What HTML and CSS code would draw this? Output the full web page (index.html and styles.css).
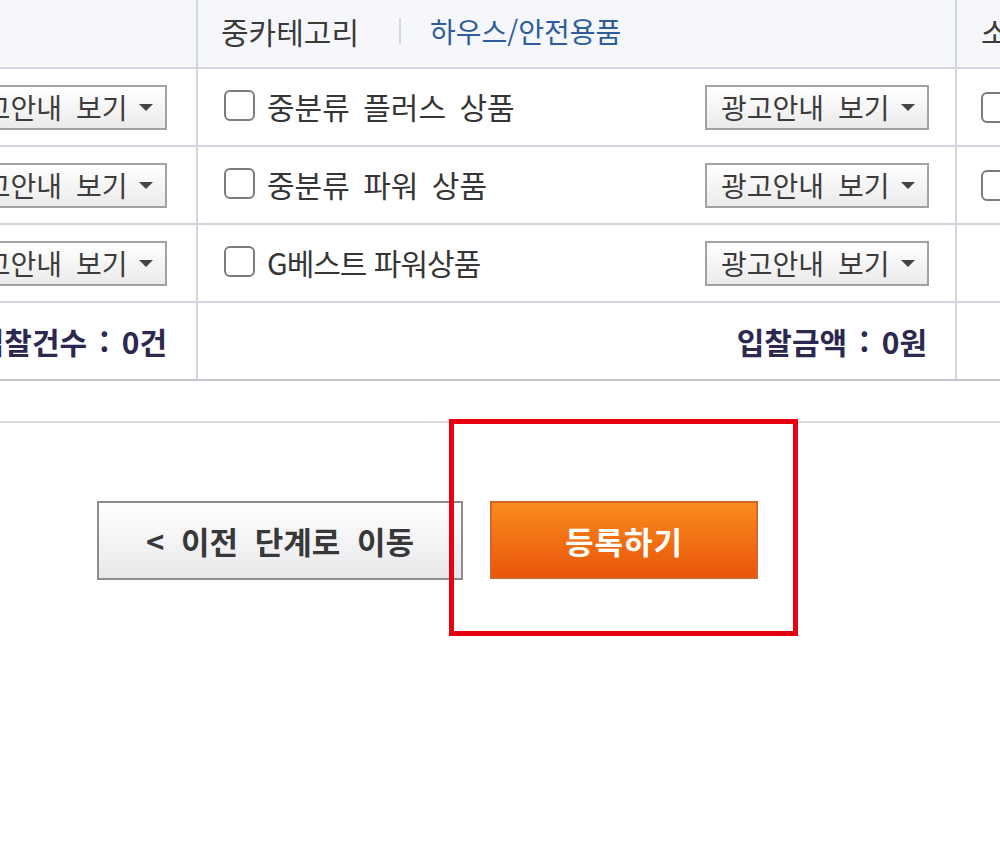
FILE: index.html
```html
<!DOCTYPE html>
<html lang="ko">
<head>
<meta charset="utf-8">
<title>광고 등록</title>
<link rel="stylesheet" href="styles.css">
</head>
<body>
<div class="page">
  <div class="grid">
    <div class="row head">
      <div class="cell left"></div>
      <div class="cell mid">
        <span class="head-label">중카테고리</span>
        <span class="sep"></span>
        <span class="head-value">하우스/안전용품</span>
      </div>
      <div class="cell right"><span class="head-label">소</span></div>
    </div>
    <div class="row">
      <div class="cell left"><button class="drop">광고안내 보기<span class="caret"></span></button></div>
      <div class="cell mid">
        <label class="opt"><span class="box"></span>중분류 플러스 상품</label>
        <button class="drop">광고안내 보기<span class="caret"></span></button>
      </div>
      <div class="cell right"><span class="box"></span></div>
    </div>
    <div class="row">
      <div class="cell left"><button class="drop">광고안내 보기<span class="caret"></span></button></div>
      <div class="cell mid">
        <label class="opt"><span class="box"></span>중분류 파워 상품</label>
        <button class="drop">광고안내 보기<span class="caret"></span></button>
      </div>
      <div class="cell right"><span class="box"></span></div>
    </div>
    <div class="row">
      <div class="cell left"><button class="drop">광고안내 보기<span class="caret"></span></button></div>
      <div class="cell mid">
        <label class="opt"><span class="box"></span><span class="tight">G베스트 파워상품</span></label>
        <button class="drop">광고안내 보기<span class="caret"></span></button>
      </div>
      <div class="cell right"></div>
    </div>
    <div class="row total">
      <div class="cell left"><span class="sum">입찰건수 : 0건</span></div>
      <div class="cell mid end"><span class="sum">입찰금액 : 0원</span></div>
      <div class="cell right"></div>
    </div>
  </div>
  <div class="rule"></div>
  <div class="actions">
    <button class="btn prev">&lt; 이전 단계로 이동</button>
    <button class="btn submit">등록하기</button>
  </div>
  <div class="highlight"></div>
</div>
</body>
</html>
```
FILE: styles.css
```css
html, body {
  margin: 0;
  padding: 0;
  background: #ffffff;
}
body {
  font-family: "Noto Sans CJK KR", "Noto Sans", sans-serif;
  color: #363636;
  overflow: hidden;
}
.page {
  position: relative;
  width: 1000px;
  height: 842px;
  overflow: hidden;
}
.grid {
  display: flex;
  flex-direction: column;
  border-bottom: 2px solid #c6c8cf;
}
.row {
  display: flex;
  height: 76px;
  border-bottom: 2px solid #d3d6e0;
}
.row.head {
  height: 67px;
  background: #f6f7fb;
}
.row.total {
  border-bottom: 0;
}
.cell {
  display: flex;
  align-items: center;
  overflow: hidden;
  white-space: nowrap;
}
.cell.left {
  width: 198px;
  flex: none;
  justify-content: flex-end;
  padding-right: 29px;
  box-sizing: border-box;
  border-right: 2px solid #d3d6e0;
}
.cell.mid {
  width: 759px;
  flex: none;
  padding: 0 26px 0 26px;
  box-sizing: border-box;
  justify-content: space-between;
  border-right: 2px solid #d3d6e0;
}
.row.head .cell.mid {
  justify-content: flex-start;
  padding-left: 23px;
}
.cell.mid.end {
  justify-content: flex-end;
  padding-right: 28px;
}
.cell.right {
  flex: 1;
  padding-left: 24px;
}
.head-label {
  font-size: 30px;
  color: #3a3a3a;
  margin-top: -6px;
}
.head-value {
  font-size: 28px;
  color: #2f5d9c;
  margin-top: -6px;
  letter-spacing: 0;
}
.sep {
  width: 2px;
  height: 26px;
  background: #d5d8e0;
  margin: -6px 29px 0 40px;
}
.opt {
  display: flex;
  align-items: center;
  font-size: 30px;
  word-spacing: 5px;
  color: #363636;
  margin-top: -3px;
}
.tight {
  word-spacing: 0;
  letter-spacing: -1px;
}
.box {
  width: 27px;
  height: 27px;
  border: 2px solid #7c7c7c;
  border-radius: 6px;
  background: #fff;
  margin-right: 12px;
  flex: none;
}
.drop {
  flex: none;
  display: flex;
  align-items: center;
  height: 45px;
  width: 224px;
  padding: 0 12px 0 14px;
  box-sizing: border-box;
  border: 2px solid #a2a2a2;
  background: linear-gradient(#ffffff, #ebebeb);
  font-family: "Noto Sans CJK KR", sans-serif;
  font-size: 28px;
  color: #3c3c3c;
  word-spacing: 6px;
  line-height: 1;
  justify-content: space-between;
}
.caret {
  width: 0;
  height: 0;
  border-left: 7px solid transparent;
  border-right: 7px solid transparent;
  border-top: 7px solid #444;
}
.sum {
  font-size: 30px;
  font-weight: bold;
  color: #2c2850;
  word-spacing: 4px;
}
.rule {
  height: 2px;
  background: #dcdcdc;
  margin-top: 40px;
}
.actions {
  display: flex;
  gap: 27px;
  padding-left: 97px;
  margin-top: 78px;
}
.btn {
  height: 79px;
  font-family: "Noto Sans CJK KR", sans-serif;
  font-size: 31px;
  font-weight: bold;
  word-spacing: 8px;
  padding: 0;
}
.btn.prev {
  width: 366px;
  border: 2px solid #8d8d8d;
  background: linear-gradient(#ffffff, #e9e9ec);
  color: #383838;
}
.btn.submit {
  width: 268px;
  height: 78px;
  border: 2px solid #d4662a;
  background: linear-gradient(#f98b1e, #e85509);
  color: #ffffff;
  letter-spacing: 1px;
}
.highlight {
  position: absolute;
  left: 449px;
  top: 419px;
  width: 339px;
  height: 207px;
  border: 5px solid #e6000f;
  pointer-events: none;
}
```
